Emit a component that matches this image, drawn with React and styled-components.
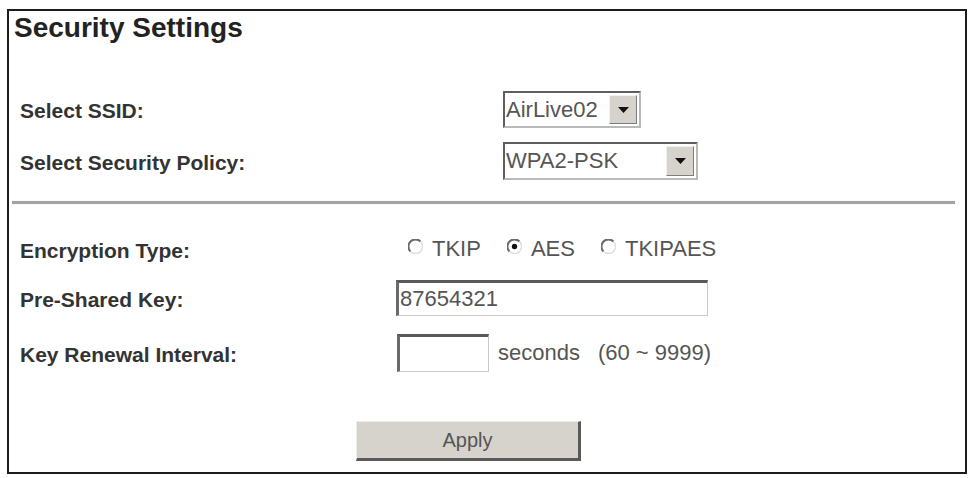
import React from "react";
import styled, { createGlobalStyle } from "styled-components";

const GlobalStyle = createGlobalStyle`
  html, body {
    margin: 0;
    padding: 0;
    background: #ffffff;
  }
  body {
    font-family: "Liberation Sans", Arial, sans-serif;
  }
`;

const Frame = styled.div`
  box-sizing: border-box;
  width: 960px;
  height: 465px;
  margin: 9px 0 0 7px;
  border: 2px solid #1c1c1c;
  display: flex;
  flex-direction: column;
`;

const Title = styled.h1`
  margin: 0;
  padding-left: 5px;
  height: 34px;
  line-height: 34px;
  font-size: 28px;
  font-weight: bold;
  color: #222;
`;

const Row = styled.div`
  display: flex;
  align-items: center;
  height: ${(p) => p.$height}px;
  margin-top: ${(p) => p.$top}px;
  padding-left: 11px;
`;

const Label = styled.div`
  width: ${(p) => p.$width}px;
  flex: none;
  font-size: 21px;
  font-weight: bold;
  color: #333;
  padding-top: 3px;
`;

const SelectBox = styled.div`
  box-sizing: border-box;
  width: ${(p) => p.$width}px;
  height: 100%;
  display: flex;
  align-items: stretch;
  border-style: solid;
  border-width: 2px;
  border-color: #5e5e5e #b9b9b9 #b9b9b9 #5e5e5e;
  background: #fff;
  font-size: 22px;
  color: #555;
`;

const SelectText = styled.div`
  flex: 1;
  display: flex;
  align-items: center;
  padding-left: 1px;
`;

const ArrowButton = styled.div`
  width: 26px;
  margin: 2px;
  display: flex;
  align-items: center;
  justify-content: center;
  background: #d6d3cc;
  border-style: solid;
  border-width: 1px;
  border-color: #f2f1ee #7d7d7d #7d7d7d #f2f1ee;
`;

const Divider = styled.div`
  height: 3px;
  margin: 21px 10px 0 3px;
  background: #a3a3a3;
  box-shadow: 0 0 1px #c4c4c4;
`;

const RadioGroup = styled.div`
  display: flex;
  align-items: center;
  gap: 26px;
  margin-left: 12px;
  font-size: 22px;
  color: #555;
`;

const RadioItem = styled.label`
  display: flex;
  align-items: center;
  gap: 9px;
`;

const RadioIcon = styled.svg`
  margin-bottom: 6px;
`;

const TextField = styled.input`
  box-sizing: border-box;
  width: ${(p) => p.$width}px;
  height: 100%;
  margin: 0;
  padding: 0 0 0 1px;
  border-style: solid;
  border-width: 3px 1px 1px 3px;
  border-color: #5a5a5a #c9c9c9 #c9c9c9 #6a6a6a;
  background: #fff;
  font-family: "Liberation Sans", Arial, sans-serif;
  font-size: 22px;
  color: #555;
  outline: none;
`;

const Note = styled.span`
  font-size: 22px;
  color: #555;
  margin-left: ${(p) => p.$gap}px;
  white-space: pre;
`;

const ButtonRow = styled.div`
  margin-top: 49px;
  padding-left: 347px;
`;

const ApplyButton = styled.button`
  box-sizing: border-box;
  width: 225px;
  height: 40px;
  margin: 0;
  padding: 0;
  background: #d6d3cc;
  border-style: solid;
  border-width: 1px 3px 3px 1px;
  border-color: #ecebe7 #5a5a5a #5a5a5a #ecebe7;
  font-family: "Liberation Sans", Arial, sans-serif;
  font-size: 20px;
  color: #555;
`;

const DownArrow = () => (
  <svg width="11" height="6" viewBox="0 0 11 6">
    <path d="M0 0 H11 L5.5 6 Z" fill="#111" />
  </svg>
);

// Classic sunken radio: dark upper-left arc, light lower-right arc
const RadioMark = ({ checked }) => (
  <RadioIcon width="15" height="15" viewBox="0 0 15 15">
    <path d="M12.5 2.5 A7 7 0 0 0 2.5 12.5" stroke="#6a6a6a" strokeWidth="2" fill="none" />
    <path d="M2.5 12.5 A7 7 0 0 0 12.5 2.5" stroke="#dcdcdc" strokeWidth="1.4" fill="none" />
    {checked && <circle cx="7.5" cy="7.5" r="2.7" fill="#111" />}
  </RadioIcon>
);

const Select = ({ width, value }) => (
  <SelectBox $width={width}>
    <SelectText>{value}</SelectText>
    <ArrowButton>
      <DownArrow />
    </ArrowButton>
  </SelectBox>
);

const encryptionTypes = [
  { name: "TKIP", checked: false },
  { name: "AES", checked: true },
  { name: "TKIPAES", checked: false },
];

export default function App() {
  return (
    <>
      <GlobalStyle />
      <Frame>
        <Title>Security Settings</Title>

        <Row $height={37} $top={46}>
          <Label $width={483}>Select SSID:</Label>
          <Select width={138} value="AirLive02" />
        </Row>
        <Row $height={38} $top={14}>
          <Label $width={483}>Select Security Policy:</Label>
          <Select width={195} value="WPA2-PSK" />
        </Row>

        <Divider />

        <Row $height={34} $top={28}>
          <Label $width={376}>Encryption Type:</Label>
          <RadioGroup>
            {encryptionTypes.map((t) => (
              <RadioItem key={t.name}>
                <RadioMark checked={t.checked} />
                {t.name}
              </RadioItem>
            ))}
          </RadioGroup>
        </Row>
        <Row $height={36} $top={14}>
          <Label $width={376}>Pre-Shared Key:</Label>
          <TextField $width={312} readOnly value="87654321" />
        </Row>
        <Row $height={38} $top={18}>
          <Label $width={377}>Key Renewal Interval:</Label>
          <TextField $width={92} readOnly value="" />
          <Note $gap={9}>seconds</Note>
          <Note $gap={18}>(60 ~ 9999)</Note>
        </Row>

        <ButtonRow>
          <ApplyButton type="button">Apply</ApplyButton>
        </ButtonRow>
      </Frame>
    </>
  );
}
